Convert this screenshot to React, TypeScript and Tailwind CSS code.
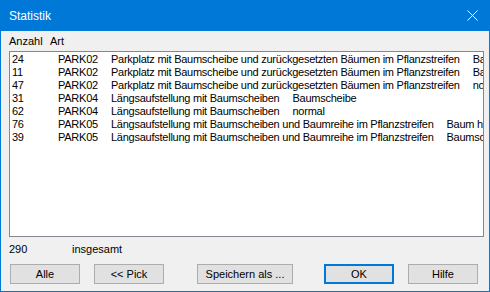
const FONT = "font-['Liberation_Sans',Arial,sans-serif]"

// ── Listeneinträge ─────────────────────────────────────────────
type Row = { count: string; code: string; desc: string; extra?: string }

const ROWS: Row[] = [
  { count: "24", code: "PARK02", desc: "Parkplatz mit Baumscheibe und zurückgesetzten Bäumen im Pflanzstreifen", extra: "Baumscheibe" },
  { count: "11", code: "PARK02", desc: "Parkplatz mit Baumscheibe und zurückgesetzten Bäumen im Pflanzstreifen", extra: "Baum hinten" },
  { count: "47", code: "PARK02", desc: "Parkplatz mit Baumscheibe und zurückgesetzten Bäumen im Pflanzstreifen", extra: "normal" },
  { count: "31", code: "PARK04", desc: "Längsaufstellung mit Baumscheiben", extra: "Baumscheibe" },
  { count: "62", code: "PARK04", desc: "Längsaufstellung mit Baumscheiben", extra: "normal" },
  { count: "76", code: "PARK05", desc: "Längsaufstellung mit Baumscheiben und Baumreihe im Pflanzstreifen", extra: "Baum hinten" },
  { count: "39", code: "PARK05", desc: "Längsaufstellung mit Baumscheiben und Baumreihe im Pflanzstreifen", extra: "Baumscheibe" },
]

function DlgButton({ label, className = "", primary = false }: { label: string; className?: string; primary?: boolean }) {
  return (
    <button
      className={`h-[20px] shrink-0 bg-[#e1e1e1] text-[11px] text-black leading-none flex items-center justify-center
        ${primary ? "border-2 border-[#0078d7]" : "border border-[#adadad]"} ${className}`}
    >
      {label}
    </button>
  )
}

export default function App() {
  return (
    <div className={`w-[490px] h-[292px] border border-[#0078d7] bg-[#f0f0f0] flex flex-col overflow-hidden ${FONT}`}>
      {/* Titelleiste */}
      <div className="h-[30px] shrink-0 bg-[#0078d7] flex items-center justify-between pl-[8px] pr-[11px]">
        <span className="text-[12px] text-white">Statistik</span>
        <svg width="11" height="11" viewBox="0 0 11 11" className="mt-[-1px]">
          <path d="M0.5 0.5 L10.5 10.5 M10.5 0.5 L0.5 10.5" stroke="#ffffff" strokeWidth="1" fill="none" />
        </svg>
      </div>

      {/* Spaltenköpfe */}
      <div className="flex pt-[4px] pl-[8px] text-[11px] leading-[13px] text-black">
        <span className="w-[41px]">Anzahl</span>
        <span>Art</span>
      </div>

      {/* Liste */}
      <div className="ml-[8px] mt-[3px] w-[475px] h-[186px] shrink-0 border border-[#828790] bg-white overflow-hidden pt-[1px] pl-[2px]">
        {ROWS.map((r, i) => (
          <div key={i} className="flex whitespace-nowrap text-[11px] leading-[13px] tracking-[-0.25px] text-black">
            <span className="w-[46px] shrink-0">{r.count}</span>
            <span className="w-[53px] shrink-0">{r.code}</span>
            <span className="shrink-0">{r.desc}</span>
            {r.extra && <span className="shrink-0 ml-[13px]">{r.extra}</span>}
          </div>
        ))}
      </div>

      {/* Summe */}
      <div className="flex mt-[6px] pl-[8px] text-[11px] leading-[13px] text-black">
        <span className="w-[63px]">290</span>
        <span>insgesamt</span>
      </div>

      {/* Schaltflächen */}
      <div className="flex mt-[8px]">
        <DlgButton label="Alle" className="ml-[9px] w-[70px]" />
        <DlgButton label="<< Pick" className="ml-[14px] w-[70px]" />
        <DlgButton label="Speichern als ..." className="ml-[33px] w-[96px]" />
        <DlgButton label="OK" primary className="ml-[31px] w-[70px]" />
        <DlgButton label="Hilfe" className="ml-[14px] w-[70px]" />
      </div>
    </div>
  )
}
